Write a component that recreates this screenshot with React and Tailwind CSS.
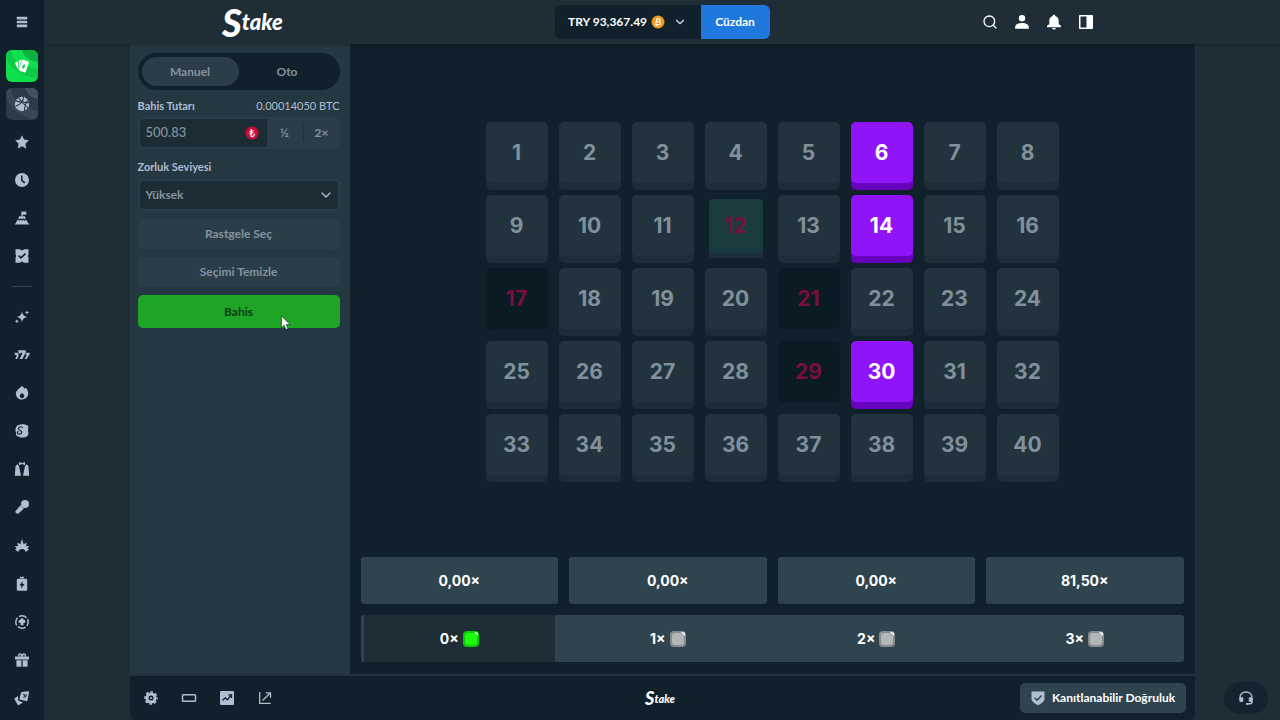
import React from 'react';
import clsx from 'clsx';
import { ChevronDown, Search } from 'lucide-react';

const Icon = ({ children, size = 'size-4', box = '0 0 16 16' }) => (
  <svg viewBox={box} className={size} fill="currentColor" aria-hidden="true">
    {children}
  </svg>
);

/* Sidebar icons, all on a 16px grid */
const MenuIcon = () => (
  <Icon>
    <rect x="2.8" y="2.8" width="10.4" height="2.6" rx=".4" />
    <rect x="2.8" y="6.7" width="10.4" height="2.6" rx=".4" />
    <rect x="2.8" y="10.6" width="10.4" height="2.6" rx=".4" />
  </Icon>
);

const CardsIcon = () => (
  <Icon>
    <path d="M.8 4.8 4.200 3.200 3.900 11.400z" />
    <path d="M5.200 2.600 7.500 1.500 4.700 11.400 4.400 11z" />
    <path
      fillRule="evenodd"
      d="M8.900 1.700 14.200 3.500c.6.2.9.7.7 1.300l-3.100 9c-.2.6-.8.9-1.400.7l-4.800-1.700c-.5-.2-.8-.7-.6-1.300L8 2.300c.1-.5.5-.8.9-.6zM10.400 5.700 8.200 8.300l.6 2.900 2.300-2.700z"
    />
  </Icon>
);

const BallIcon = () => (
  <Icon>
    <circle cx="8" cy="8" r="7.2" />
    <g fill="none" stroke="#2c3d49" strokeWidth="1.1">
      <path d="M1.5 5.2C6 4.5 11.5 8 14 12.5" />
      <path d="M4.5 1.2c1 3.5 5 6.3 10.5 5.2" />
      <path d="M9.5.8C10 4 6.5 8.5 1.5 10.5" />
      <path d="M10.8 15c-.8-3 .6-8 3-10.5" />
    </g>
  </Icon>
);

const StarIcon = () => (
  <Icon>
    <path d="m8 1.3 2.1 4.3 4.7.7-3.4 3.4.8 4.7L8 12.2l-4.2 2.2.8-4.7L1.2 6.3l4.7-.7z" />
  </Icon>
);

const ClockIcon = () => (
  <Icon>
    <circle cx="8" cy="8" r="7" />
    <path d="M7.8 3.6v4.7l3 2.6" fill="none" stroke="#10212b" strokeWidth="1.5" />
  </Icon>
);

const SummitIcon = () => (
  <Icon>
    <path d="M7.3 1.5h5v3.2H8.6v1.6H7.3z" />
    <path d="M5.2 6.2h5.6l1 2-1.4 1-1.2-1L8 9.3 6.7 8.2l-1.2 1-1.2-1z" />
    <path d="m3.8 9.6 1.7 1.1 1.2-1L8 10.8l1.300-1 1.200 1 1.700-1.100 3 4.800H.9z" />
  </Icon>
);

const TicketIcon = () => (
  <Icon>
    <path d="M1.500 1.200h4.700c.3 1.500 3.300 1.500 3.600 0h4.700v5.600c-.8.300-.8 2.100 0 2.400v5.600H9.800c-.3-1.500-3.300-1.500-3.600 0H1.500V9.200c.8-.3.8-2.100 0-2.400z" />
    <path d="m4.600 7.600 2.300 2.200 4.600-4.200" fill="none" stroke="#10212b" strokeWidth="1.600" />
  </Icon>
);

const SparkIcon = () => (
  <Icon>
    <path d="M8 2.500c.6 3.200 1.800 4.600 5.200 5.400C9.800 8.800 8.600 10 8 13.400 7.400 10 6.200 8.800 2.800 7.900 6.200 7.100 7.400 5.700 8 2.500z" />
    <path d="M13 1.500l.6 1.300 1.400.7-1.400.7-.6 1.300-.7-1.300-1.300-.7 1.300-.7zM2.900 10.300l.6 1.300 1.400.7-1.400.7-.6 1.300-.7-1.300-1.300-.7 1.300-.7z" />
  </Icon>
);

const SlotsIcon = () => (
  <Icon>
    <path d="M4.200 3.200h7.600v2L8.400 12H5.600l3-6.300H6.900l-.3.900H4.700zM.6 5.700h3.200l.5 1.800H5L3.200 12H1.300l1.500-4H1zM12.300 5.700h3.400l-.2 1.800L12.600 12h-2l2.300-4.200h-1.600z" />
  </Icon>
);

const FlameIcon = () => (
  <Icon>
    <path
      fillRule="evenodd"
      d="M7.800 1c1.400.8 2.300 1.700 2.700 2.800l1.300-1c1.800 1.900 2.700 4.100 2.400 6.300-.4 3.200-2.900 5.400-6.200 5.400S2.200 12.300 1.900 9.200C1.600 6.100 4 4.600 7.800 1zM8 8c-1.400 1.100-2.200 1.900-2.200 3 0 1.200.9 2.100 2.200 2.100s2.200-.9 2.200-2.100C10.200 9.900 9.400 9.100 8 8z"
    />
  </Icon>
);

const ShieldSIcon = () => (
  <Icon>
    <path d="M4 2.200C7 .7 11 1 13.300 2.300c1.200.8 1.500 2.300.6 3.500.7.7.4 1.600 0 2 .9 1.600.7 4-.6 5.300-1.800 1.900-6.300 1.900-8.300.6C2.300 13.500 1.600 11.500 2 9.800 1 7 1.500 3.500 4 2.200z" />
    <path
      d="M8.400 5.200c.3-2-3.800-1.800-4 .4-.1 2 3.700 1.600 3.500 3.700-.2 2.300-4.400 2.500-4.600.4 0-.8.8-1.200 1.500-.9"
      fill="none"
      stroke="#10212b"
      strokeWidth="1.100"
    />
  </Icon>
);

const TuxedoIcon = () => (
  <Icon>
    <path d="m5 .9 3 1.200L11 .9v3.300L8 3.100 5 4.200z" />
    <path d="M3.600 3.200 5 5.200l2 9.600H.8L1.600 5zM12.400 3.200 11 5.200l-2 9.600h6.200L14.400 5z" />
  </Icon>
);

const MicIcon = () => (
  <Icon>
    <circle cx="11" cy="5" r="4" />
    <path d="m6.500 6.300 3.300 3.400-5.400 4.800c-1.400 1-4-.9-2.600-2.700z" />
  </Icon>
);

const BurstIcon = () => (
  <Icon>
    <path d="m8 .9 1.700 5.400 3.100-1.700-.8 3.700 3.300-.3-1.900 2.600 1.600.8-3.300 2.700c-.4-2-1.800-3-3.700-3s-3.300 1-3.700 3L1 11.400l1.600-.8L.7 8l3.300.3-.8-3.700 3.100 1.700z" />
  </Icon>
);

const BatteryIcon = () => (
  <Icon>
    <path d="M6 .8h4v1.500H6z" />
    <rect x="2.800" y="2.800" width="10.400" height="12" rx="1.200" />
    <path d="M8.900 5 5.400 9.400h2.100l-.5 3.300 3.600-4.600H8.400z" fill="#10212b" />
  </Icon>
);

const ChipIcon = () => (
  <Icon>
    <circle cx="8" cy="8" r="6.200" fill="none" stroke="currentColor" strokeWidth="1.500" strokeDasharray="8.100 1.640" strokeDashoffset="4" />
    <path d="M8 4.200c.8 0 1.400.6 1.400 1.400 1.100 0 2 .8 2 1.900s-1 1.800-2.200 1.700l.5 2H6.300l.5-2c-1.200.1-2.200-.6-2.200-1.700s.9-1.900 2-1.900c0-.8.600-1.400 1.400-1.400z" />
  </Icon>
);

const GiftIcon = () => (
  <Icon>
    <path
      d="M4.800 4.500c-.6-3.600 2.600-3.300 3.200 0 .6-3.300 3.800-3.600 3.200 0"
      fill="none"
      stroke="currentColor"
      strokeWidth="1.500"
    />
    <path d="M1 4.600h14v3H1zM2.400 8.300h5v6.500h-4c-.6 0-1-.4-1-1zM8.600 8.300h5v5.500c0 .6-.4 1-1 1h-4z" />
  </Icon>
);

const DeckIcon = () => (
  <Icon>
    <path d="m.8 8.300 3.200-2.300.3 4.500 4.700 2-4 2.500c-.5.300-1 .2-1.300-.3L.6 9.400c-.3-.4-.2-.8.2-1.100z" />
    <path d="M8 2 13.800 1.200c.8-.1 1.300.4 1.200 1.200l-1.500 7.800c-.1.700-.7 1.100-1.400.9L6.300 9.700c-.7-.2-1-.8-.8-1.400l1.500-5.400c.1-.5.5-.8 1-.9z" />
    <path d="M9 4.500l2 .5-1.300 2.800M12.300 4.200l-.8 3.300" stroke="#10212b" fill="none" />
  </Icon>
);

/* Header icons */
const UserIcon = () => (
  <Icon>
    <circle cx="8" cy="4.300" r="3.200" />
    <path d="M1.200 14.800v-1.500C1.200 10.600 3.600 9 8 9s6.800 1.600 6.800 4.300v1.500z" />
  </Icon>
);

const BellIcon = () => (
  <Icon>
    <path d="M8 .8c.8 0 1.300.5 1.300 1.200 2.200.6 3.400 2.300 3.400 4.700v3.500l2.200 1.400v1.600H1.100v-1.600l2.200-1.400V6.700c0-2.400 1.200-4.100 3.400-4.700C6.700 1.300 7.200.8 8 .8zM6 14h4c-.2.900-1 1.500-2 1.500S6.200 14.900 6 14z" />
  </Icon>
);

const PanelIcon = () => (
  <Icon>
    <path fillRule="evenodd" d="M2 1h12c.6 0 1 .4 1 1v12c0 .6-.4 1-1 1H2c-.6 0-1-.4-1-1V2c0-.6.400-1 1-1zm.5 1.500v11h6v-11z" />
  </Icon>
);

/* Game footer icons */
const GearIcon = () => (
  <Icon>
    <circle cx="8" cy="8" r="4" fill="none" stroke="currentColor" strokeWidth="3" />
    <circle cx="8" cy="8" r="5.900" fill="none" stroke="currentColor" strokeWidth="1.800" strokeDasharray="2.600 2.034" strokeDashoffset="1.300" />
    <circle cx="8" cy="8" r="1" />
  </Icon>
);

const TheatreIcon = () => (
  <Icon>
    <rect x="1.500" y="4.700" width="13" height="6.600" rx=".8" fill="none" stroke="currentColor" strokeWidth="1.500" />
  </Icon>
);

const StatsIcon = () => (
  <Icon>
    <rect x="1" y="1" width="14" height="14" rx="1" />
    <path d="m3.500 10.500 2.800-2.700 2 2L12 5.500M9.300 4.800h3.200V8" fill="none" stroke="#10212b" strokeWidth="1.300" />
  </Icon>
);

const LaunchIcon = () => (
  <Icon>
    <path d="M2.700 2v11.300h11M5.500 10.500l7.500-7.300M8.600 2.800h4.900v4.900" fill="none" stroke="currentColor" strokeWidth="1.300" />
  </Icon>
);

const FairIcon = () => (
  <Icon>
    <path d="M1.500 1.600h13v8.200c0 1.400-4.200 4.600-6.500 5.400-2.300-.8-6.500-4-6.500-5.400z" />
    <path d="m4.500 7.800 2.600 2.400 4.400-4.700" fill="none" stroke="#30444f" strokeWidth="1.400" />
  </Icon>
);

const HeadsetIcon = () => (
  <Icon>
    <path
      d="M2 9V7.600C2 4.300 4.600 2 8 2s6 2.300 6 5.600V12c0 1.200-.8 1.800-2 1.800H9.500"
      fill="none"
      stroke="currentColor"
      strokeWidth="1.400"
    />
    <path d="M1.300 8.200c0-.6 3.900-1.500 3.900-.6v4c0 1-3.900.2-3.900-.7zM14.700 8.200c0-.6-3.900-1.500-3.900-.6v4c0 1 3.900.2 3.900-.7zM8 13h2.400v1.700H8z" />
  </Icon>
);

const MAIN_NAV = [
  { label: 'Favoriler', icon: StarIcon },
  { label: 'Son Oynananlar', icon: ClockIcon },
  { label: 'Mücadeleler', icon: SummitIcon },
  { label: 'Bahislerim', icon: TicketIcon },
];

const GAME_NAV = [
  { label: 'Yeni Çıkanlar', icon: SparkIcon },
  { label: 'Slotlar', icon: SlotsIcon },
  { label: 'Popüler', icon: FlameIcon },
  { label: 'Orijinaller', icon: ShieldSIcon },
  { label: 'Canlı Casino', icon: TuxedoIcon },
  { label: 'Programlar', icon: MicIcon },
  { label: 'Patlama', icon: BurstIcon },
  { label: 'Bonus', icon: BatteryIcon },
  { label: 'Poker', icon: ChipIcon },
  { label: 'Promosyonlar', icon: GiftIcon },
  { label: 'Blackjack', icon: DeckIcon },
];

const PAYOUTS = ['0,00×', '0,00×', '0,00×', '81,50×'];
const HITS = ['0×', '1×', '2×', '3×'];

const PICKED = [6, 14, 30];
const MISSED = [17, 21, 29];
const REVEALING = 12;

const NavLink = ({ label, icon: NavIcon }) => (
  <a href="#" aria-label={label} className="flex size-8 shrink-0 items-center justify-center text-[#b1bdd0]">
    <NavIcon />
  </a>
);

const Sidebar = () => (
  <nav className="flex w-11 shrink-0 flex-col items-center bg-[#10212b]">
    <button aria-label="Menü" className="flex h-11 w-full items-center justify-center text-[#b1bdd0]">
      <MenuIcon />
    </button>
    <div className="flex flex-col gap-1.5 pt-1.5">
      <a
        href="#"
        aria-label="Casino"
        className="relative flex size-8 items-center justify-center overflow-hidden rounded-md bg-[#10df4c] text-white"
      >
        <svg viewBox="0 0 32 32" className="absolute inset-0" aria-hidden="true">
          <path d="M5 0c0 9 8 16 27 19v9C14 26 2 17 0 5V0z" fill="#0ec847" />
          <path d="M16 0c2 7 8 11 16 12V0z" fill="#0bb03e" />
        </svg>
        <span className="relative">
          <CardsIcon />
        </span>
      </a>
      <a
        href="#"
        aria-label="Spor"
        className="relative flex size-8 items-center justify-center overflow-hidden rounded-md bg-[#2b3c48] text-[#b1bdd0]"
      >
        <svg viewBox="0 0 32 32" className="absolute inset-0" aria-hidden="true">
          <path d="M5 0c0 9 6 18 27 23v9C14 30 2 19 0 6V0z" fill="#364854" />
          <path d="M19 0c2 6 7 10 13 11V0z" fill="#40525e" />
        </svg>
        <span className="relative">
          <BallIcon />
        </span>
      </a>
      {MAIN_NAV.map((item) => (
        <NavLink key={item.label} {...item} />
      ))}
    </div>
    <hr className="my-3.5 w-5 border-[#30444f]" />
    <div className="flex flex-1 flex-col justify-between pb-1.5">
      {GAME_NAV.map((item) => (
        <NavLink key={item.label} {...item} />
      ))}
    </div>
  </nav>
);

const Logo = ({ small }) => (
  <span
    className={clsx(
      'flex items-center font-black italic leading-none text-white',
      small ? 'text-[11px]' : 'text-[22px]'
    )}
  >
    <span className={small ? 'text-[18px]' : 'text-[38px]'}>S</span>take
  </span>
);

const Header = () => (
  <header className="z-10 h-11 bg-[#1e2d36] shadow-[0_1px_3px_rgba(0,0,0,0.25)]">
    <div className="mx-auto grid h-full max-w-[880px] grid-cols-[1fr_auto_1fr] items-center">
      <a href="#" aria-label="Stake">
        <Logo />
      </a>
      <div className="flex h-[34px] text-xs font-bold text-white">
        <button className="flex w-[146px] items-center justify-center gap-1 rounded-l-md bg-[#10212b]">
          TRY 93,367.49
          <svg viewBox="0 0 14 14" className="size-3.5" aria-hidden="true">
            <circle cx="7" cy="7" r="6.500" fill="#f09a26" />
            <path
              d="M5.600 4h2.200c1.700.1 1.700 2.600 0 2.700H5.400h2.500c2 .1 1.800 3.100-.2 3.100H4.600L5.800 4M7 3l-.3 1M6 9.800l-.3 1.200"
              fill="none"
              stroke="#fff"
              strokeWidth="1.100"
            />
          </svg>
          <ChevronDown className="ml-1 size-3.5 text-[#d5dceb]" />
        </button>
        <button className="w-[69px] rounded-r-md bg-[#1f78dd]">Cüzdan</button>
      </div>
      <div className="flex justify-end text-white">
        <button aria-label="Ara" className="flex size-8 items-center justify-center">
          <Search className="size-4" strokeWidth={2} />
        </button>
        <button aria-label="Hesap" className="flex size-8 items-center justify-center">
          <UserIcon />
        </button>
        <button aria-label="Bildirimler" className="flex size-8 items-center justify-center">
          <BellIcon />
        </button>
        <button aria-label="Panel" className="flex size-8 items-center justify-center">
          <PanelIcon />
        </button>
      </div>
    </div>
  </header>
);

const BetPanel = () => (
  <aside className="flex w-[220px] shrink-0 flex-col bg-[#243842] px-2 pt-[9px] pr-[10px] text-xs font-bold text-[#84949f]">
    <div className="flex h-[37px] rounded-full bg-[#10212b] p-1">
      <button className="flex-1 rounded-full bg-[#2b3d48]">Manuel</button>
      <button className="flex-1">Oto</button>
    </div>

    <div className="mt-1.5 flex h-[21px] items-center justify-between text-[11px] text-[#b1bdd0]">
      <label htmlFor="bet">Bahis Tutarı</label>
      <span className="font-normal">0.00014050 BTC</span>
    </div>
    <div className="flex h-8 rounded-[5px] bg-[#2b3d48]">
      <div className="flex flex-1 items-center rounded-l-[5px] border-2 border-r-0 border-[#2a3d48] bg-[#1c2c35] pr-2">
        <input
          id="bet"
          type="text"
          defaultValue="500.83"
          className="w-0 flex-1 bg-transparent pl-1.5 text-[13px] font-medium outline-none"
        />
        <svg viewBox="0 0 14 14" className="size-3.5" aria-hidden="true">
          <circle cx="7" cy="7" r="6.500" fill="#cf0b3c" />
          <path d="M6.200 3v7.500c2 .2 3.300-.8 3.300-2.700M4.500 6l4-1.500M4.500 8l4-1.500" fill="none" stroke="#fff" strokeWidth="1.200" />
        </svg>
      </div>
      <button className="w-9">½</button>
      <span className="my-2 w-px bg-[#20323c]" />
      <button className="w-9">2×</button>
    </div>

    <label htmlFor="risk" className="mt-1.5 flex h-6 items-center text-[11px] text-[#b1bdd0]">
      Zorluk Seviyesi
    </label>
    <div className="relative">
      <select
        id="risk"
        className="h-8 w-full appearance-none rounded-[5px] border-2 border-[#2a3d48] bg-[#1c2c35] px-1.5 outline-none"
      >
        <option>Yüksek</option>
      </select>
      <ChevronDown className="pointer-events-none absolute top-2 right-1.5 size-4 text-[#b1bdd0]" />
    </div>

    <button className="mt-2 h-[30px] rounded-[5px] bg-[#2b3d48]">Rastgele Seç</button>
    <button className="mt-2 h-[30px] rounded-[5px] bg-[#2b3d48]">Seçimi Temizle</button>
    <div className="relative mt-2">
      <button className="h-[33px] w-full rounded-[5px] bg-[#1fa526] text-[#0b3a1b]">Bahis</button>
      {/* mouse pointer */}
      <svg viewBox="0 0 10 14" className="absolute top-5 left-[142px] h-4 w-3" aria-hidden="true">
        <path d="M1 .8v10.400l2.400-2.200 1.600 3.700 1.800-.8-1.600-3.600h3.400z" fill="#fff" stroke="#1b2b25" strokeWidth=".6" />
      </svg>
    </div>
  </aside>
);

const Tile = ({ n }) => {
  if (n === REVEALING) {
    return (
      <button className="mx-1 mt-1 mb-2.5 h-[54px] rounded-sm bg-[#1b3c3e] text-[#790f3c] shadow-[0_5px_0_#1a2f3a]">
        {n}
      </button>
    );
  }
  return (
    <button
      className={clsx(
        'mb-[7px] h-[61px] rounded-[5px]',
        PICKED.includes(n) && 'bg-[#8f14f7] text-white shadow-[0_7px_0_#6702bd]',
        MISSED.includes(n) && 'bg-[#0b1b24] text-[#790f3c]',
        !PICKED.includes(n) && !MISSED.includes(n) && 'bg-[#22333e] text-[#81919c] shadow-[0_7px_0_#1c2d37]'
      )}
    >
      {n}
    </button>
  );
};

const Gem = ({ lit }) => (
  <svg viewBox="0 0 16 16" className="size-4" aria-hidden="true">
    <rect width="16" height="16" rx="4" fill={lit ? '#0cc90a' : '#858a8e'} />
    <rect x="2" y="2" width="12" height="12" rx="3" fill={lit ? '#1bfd0d' : '#b4b5b6'} />
    <path d="M11 1h2c1.200 0 2 .8 2 2v2z" fill={lit ? '#a4ff9c' : '#f2f4f5'} />
  </svg>
);

const Board = () => (
  <section className="flex min-w-0 flex-1 flex-col bg-[#10212b] px-[11px] pb-3 font-['Inter',sans-serif] font-bold">
    <div className="flex flex-1 items-center justify-center pt-[3px]">
      <div className="grid grid-cols-[repeat(8,62px)] gap-x-[11px] gap-y-[5px] text-[21px]">
        {Array.from({ length: 40 }, (_, i) => (
          <Tile key={i} n={i + 1} />
        ))}
      </div>
    </div>
    <div className="grid grid-cols-4 gap-[11px] text-sm text-white">
      {PAYOUTS.map((value, i) => (
        <div key={i} className="flex h-[47px] items-center justify-center rounded-[3px] bg-[#30444f]">
          {value}
        </div>
      ))}
    </div>
    <div className="mt-[11px] grid grid-cols-4 gap-[11px] overflow-hidden rounded-[3px] bg-[#30444f] text-sm text-white">
      {HITS.map((value, i) => (
        <div
          key={value}
          className={clsx(
            'flex h-[47px] items-center justify-center gap-1',
            i === 0 && 'border-x-3 border-[#30444f] bg-[#1e2d36]'
          )}
        >
          {value}
          <Gem lit={i === 0} />
        </div>
      ))}
    </div>
  </section>
);

const FooterButton = ({ label, children }) => (
  <button aria-label={label} className="flex size-8 items-center justify-center">
    {children}
  </button>
);

const GameFooter = () => (
  <footer className="grid h-[46px] grid-cols-[1fr_auto_1fr] items-center rounded-b-md border-t-2 border-[#22333e] bg-[#10212b] pr-[9px] pl-[5px]">
    <div className="flex gap-1.5 text-[#b1bdd0]">
      <FooterButton label="Ayarlar">
        <GearIcon />
      </FooterButton>
      <FooterButton label="Sinema Modu">
        <TheatreIcon />
      </FooterButton>
      <FooterButton label="Canlı İstatistik">
        <StatsIcon />
      </FooterButton>
      <FooterButton label="Paylaş">
        <LaunchIcon />
      </FooterButton>
    </div>
    <Logo small />
    <a
      href="#"
      className="flex h-[30px] w-[166px] items-center justify-center gap-1.5 justify-self-end rounded-[5px] bg-[#30444f] text-xs font-bold text-white"
    >
      <span className="text-[#b1bdd0]">
        <FairIcon />
      </span>
      Kanıtlanabilir Doğruluk
    </a>
  </footer>
);

const App = () => (
  <div className="flex min-h-screen bg-[#1e2d36] font-['Lato',sans-serif]">
    <Sidebar />
    <div className="flex min-w-0 flex-1 flex-col">
      <Header />
      <main className="mx-auto flex w-full max-w-[1065px] flex-1 flex-col">
        <div className="flex flex-1">
          <BetPanel />
          <Board />
        </div>
        <GameFooter />
      </main>
    </div>
    <button
      aria-label="Canlı Destek"
      className="fixed right-3 bottom-1.5 flex h-8 w-11 items-center justify-center rounded-full bg-[#14242e] text-[#b1bdd0]"
    >
      <HeadsetIcon />
    </button>
  </div>
);

export default App;
